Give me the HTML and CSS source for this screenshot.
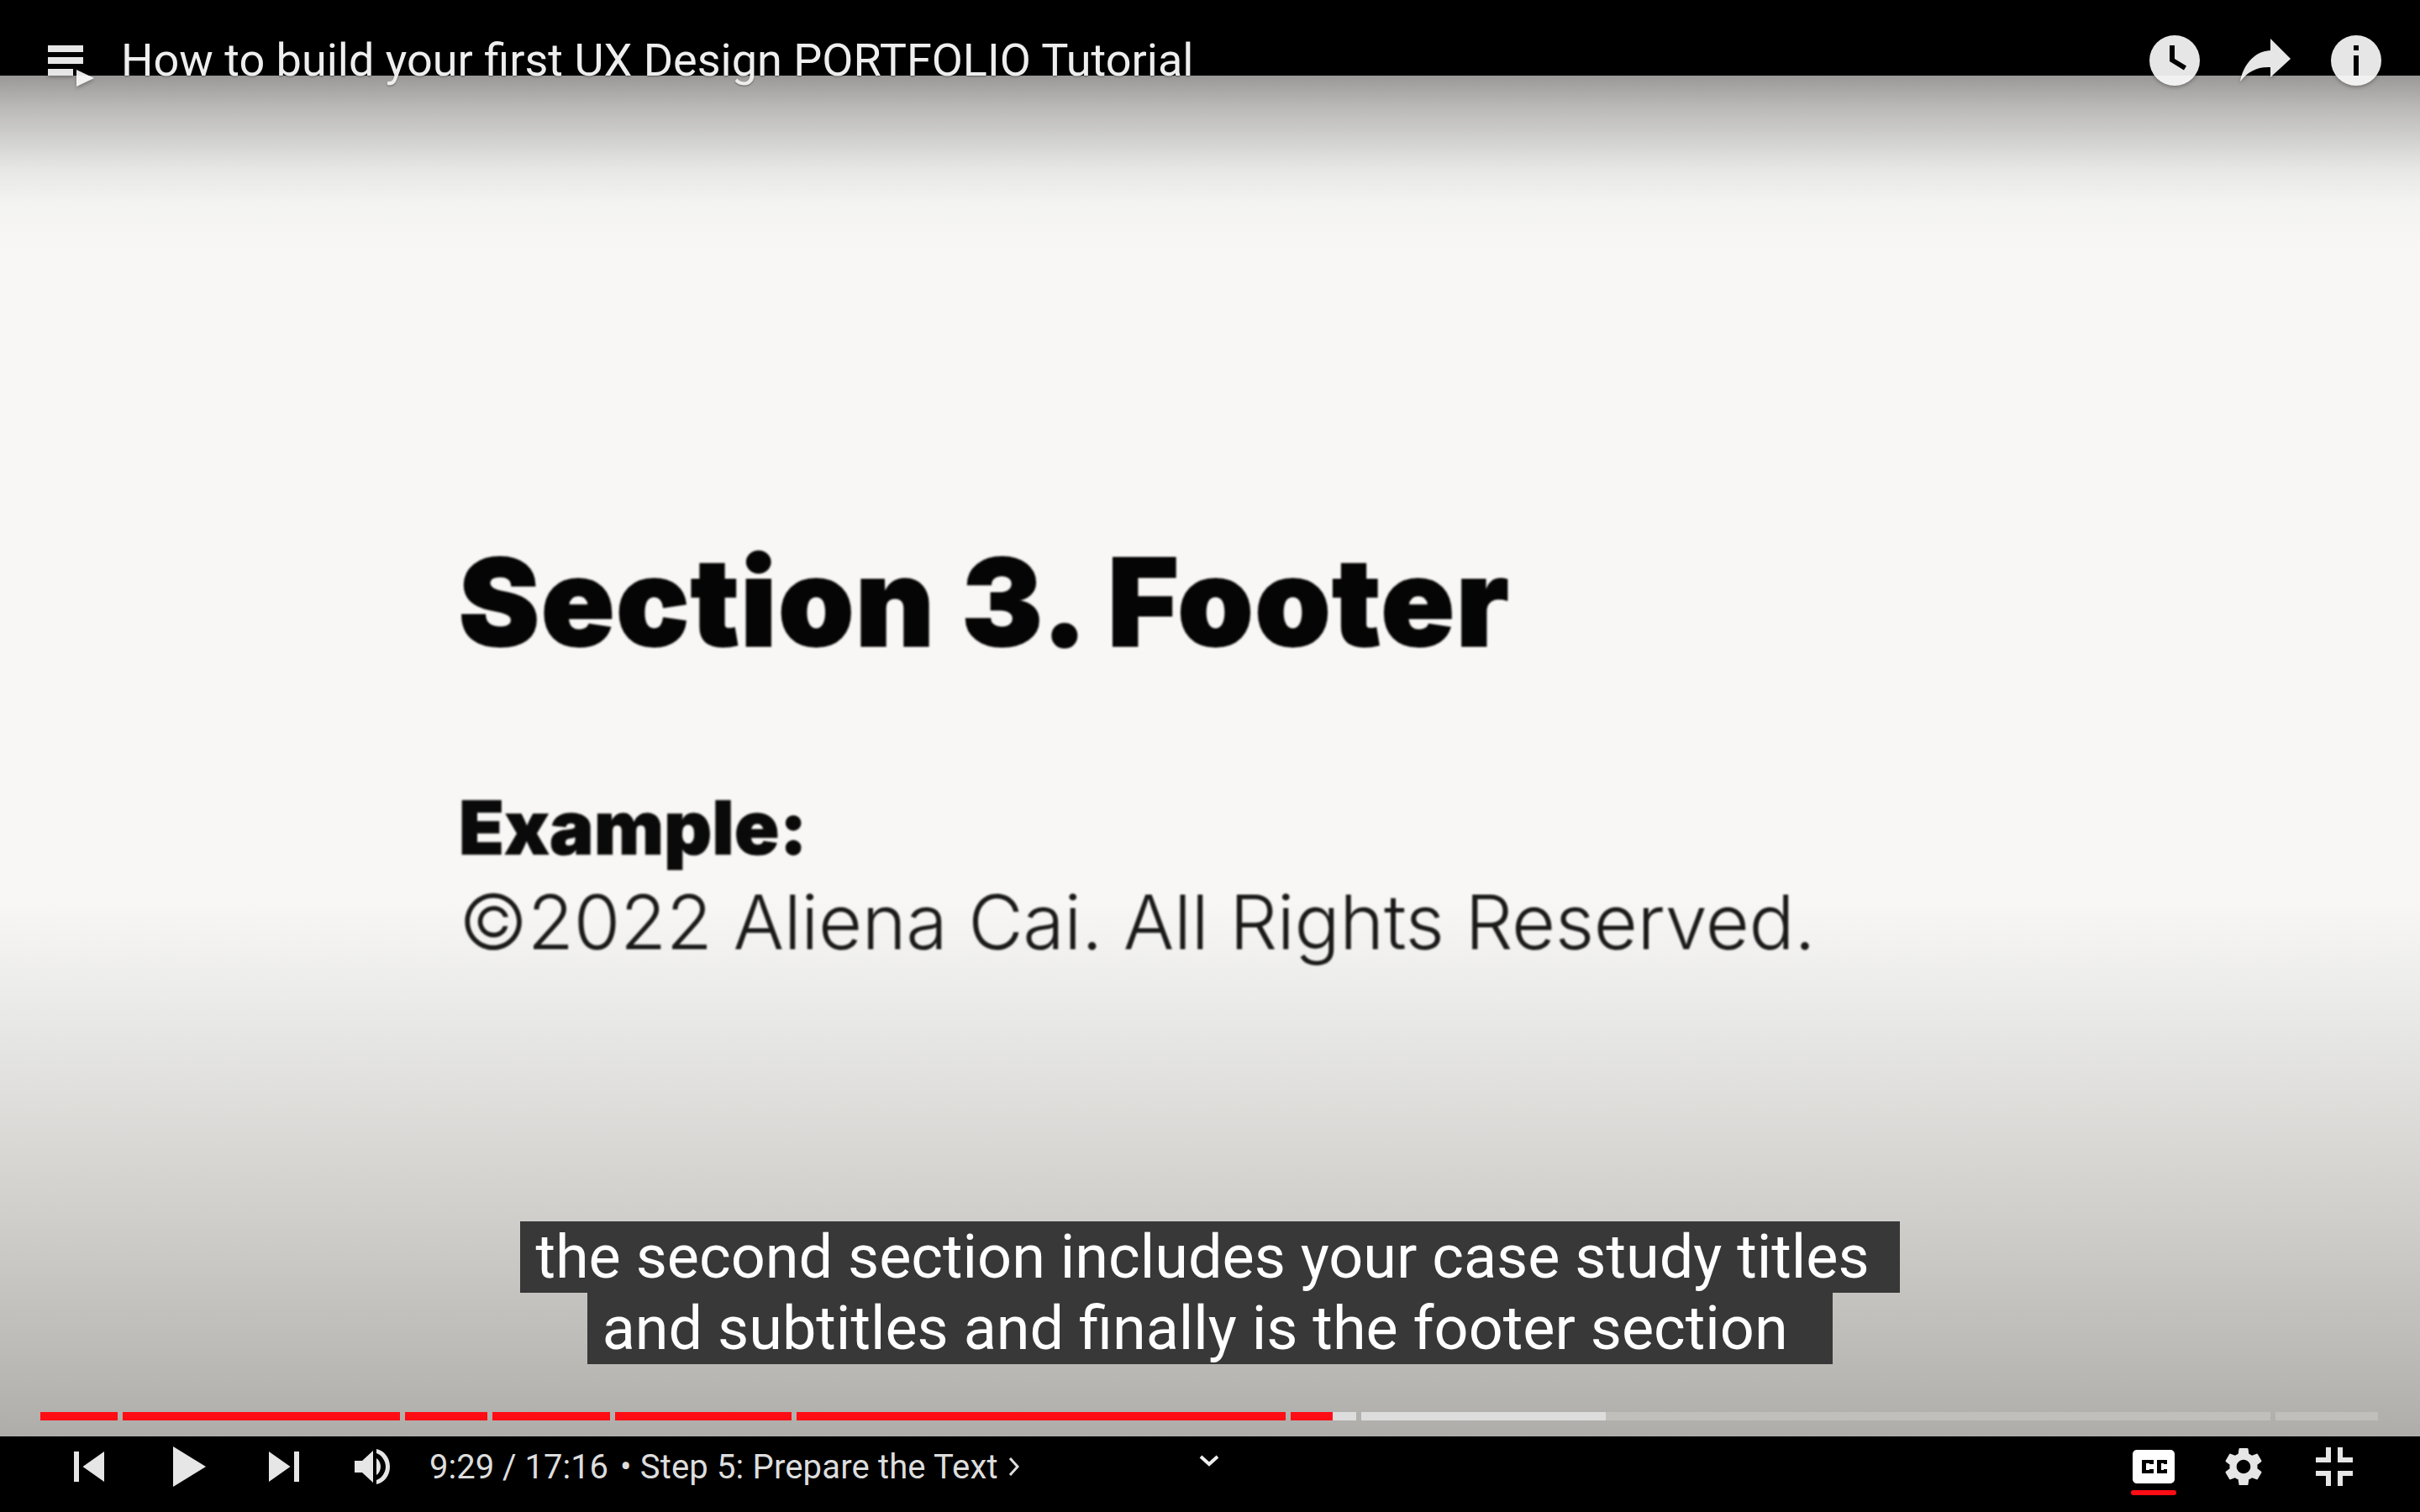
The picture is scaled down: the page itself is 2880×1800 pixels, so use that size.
FILE: index.html
```html
<!DOCTYPE html>
<html lang="en">
<head>
    <meta charset="UTF-8">
    <title>How to build your first UX Design PORTFOLIO Tutorial</title>
    <link rel="stylesheet" href="styles.css">
</head>
<body>
    <div class="player">
        <div class="topbar">
            <svg class="icon playlist-icon" width="56" height="50" viewBox="0 0 56 50">
                <path d="M0 0h42v8H0zM0 14h42v8H0zM0 28h30v8H0zM34 29l21 10-21 10z"/>
            </svg>
            <div class="title">How to build your first UX Design PORTFOLIO Tutorial</div>
            <svg class="icon clock-icon" width="60" height="60" viewBox="0 0 60 60">
                <circle cx="30" cy="30" r="30"/>
                <path class="cut" d="M24 12h6v16l14 8.500-3 5-17-10.500z"/>
            </svg>
            <svg class="icon share-icon" width="62" height="52" viewBox="0 0 62 52">
                <path d="M37 0l24 24-24 22V34C22 33 10 39 1 51 4 34 16 15 37 14z"/>
            </svg>
            <svg class="icon info-icon" width="60" height="60" viewBox="0 0 60 60">
                <circle cx="30" cy="30" r="30"/>
                <path class="cut" d="M27 12h6v6h-6zM27 24h6v24h-6z"/>
            </svg>
        </div>

        <div class="video">
            <div class="slide">
                <h1 class="slide-title">Section 3. Footer</h1>
                <div class="slide-label">Example:</div>
                <div class="slide-text">©2022 Aliena Cai. All Rights Reserved.</div>
            </div>

            <div class="captions">
                <div class="caption-line">the second section includes your case study titles&nbsp;</div>
                <div class="caption-line">and subtitles and finally is the footer section&nbsp;&nbsp;</div>
            </div>

            <div class="progress">
                <div class="seg" style="width:92px"><div class="played" style="width:100%"></div></div>
                <div class="seg" style="width:330px"><div class="played" style="width:100%"></div></div>
                <div class="seg" style="width:98px"><div class="played" style="width:100%"></div></div>
                <div class="seg" style="width:140px"><div class="played" style="width:100%"></div></div>
                <div class="seg" style="width:210px"><div class="played" style="width:100%"></div></div>
                <div class="seg" style="width:582px"><div class="played" style="width:100%"></div></div>
                <div class="seg buffered" style="width:78px"><div class="played" style="width:50px"></div></div>
                <div class="seg" style="width:1082px"><div class="loaded" style="width:291px"></div></div>
                <div class="seg" style="width:122px"></div>
            </div>
        </div>

        <div class="controls">
            <svg class="icon prev-icon" width="36" height="36" viewBox="0 0 36 36">
                <path d="M0 0h6v36H0zM36 0v36L10.500 18z"/>
            </svg>
            <svg class="icon play-icon" width="39" height="48" viewBox="0 0 39 48">
                <path d="M0 0l39 24L0 48z"/>
            </svg>
            <svg class="icon next-icon" width="36" height="36" viewBox="0 0 36 36">
                <path d="M0 0l25.500 18L0 36zM30 0h6v36h-6z"/>
            </svg>
            <svg class="icon volume-icon" width="42" height="42" viewBox="0 0 42 42">
                <path d="M0 14h9L22 2v38L9 28H0zM26 0c9 2 16 10 16 21s-7 19-16 21v-5c6-2 11-9 11-16S32 7 26 5zM26 11c3 2 5 6 5 10s-2 8-5 10z"/>
            </svg>
            <span class="time">9:29 / 17:16</span>
            <span class="chapter">• Step 5: Prepare the Text</span>
            <svg class="chapter-arrow" width="14" height="22" viewBox="0 0 14 22">
                <path d="M2 1l9 10-9 10" fill="none" stroke="#ddd" stroke-width="3"/>
            </svg>
            <svg class="chevron" width="24" height="14" viewBox="0 0 24 14">
                <path d="M2 2l10 9 10-9" fill="none" stroke="#eee" stroke-width="4"/>
            </svg>
            <div class="cc">
                <svg class="cc-icon" width="50" height="40" viewBox="0 0 50 40">
                    <path d="M5 0h40a5 5 0 0 1 5 5v30a5 5 0 0 1-5 5H5a5 5 0 0 1-5-5V5a5 5 0 0 1 5-5zM11 12v16h14v-5h-5v1h-4v-8h4v1h5v-5zM29 12v16h12v-5h-4v1h-3v-8h3v1h4v-5z" fill="#fff" fill-rule="evenodd"/>
                </svg>
                <div class="cc-bar"></div>
            </div>
            <svg class="icon gear-icon" width="46" height="46" viewBox="2 2 20 20">
                <path d="M19.140 12.940c.04-.3.06-.61.06-.94 0-.32-.02-.64-.07-.94l2.030-1.580c.18-.14.23-.41.12-.61l-1.920-3.320c-.12-.22-.37-.29-.59-.22l-2.390.96c-.5-.38-1.030-.7-1.620-.94l-.36-2.540c-.04-.24-.24-.41-.48-.41h-3.840c-.24 0-.43.17-.47.41l-.36 2.540c-.59.24-1.130.57-1.620.94l-2.390-.96c-.22-.08-.47 0-.59.22L2.740 8.870c-.12.21-.08.47.12.61l2.030 1.580c-.05.3-.09.63-.09.94s.02.64.07.94l-2.030 1.580c-.18.14-.23.41-.12.61l1.920 3.320c.12.22.37.29.59.22l2.390-.96c.5.38 1.030.7 1.620.94l.36 2.540c.05.24.24.41.48.41h3.840c.24 0 .44-.17.47-.41l.36-2.540c.59-.24 1.130-.56 1.620-.94l2.390.96c.22.08.47 0 .59-.22l1.920-3.320c.12-.22.07-.47-.12-.61l-2.010-1.580zM12 15.600c-1.980 0-3.600-1.620-3.600-3.600s1.620-3.600 3.600-3.600 3.600 1.620 3.600 3.600-1.620 3.600-3.600 3.600z" fill-rule="evenodd"/>
            </svg>
            <svg class="icon exit-icon" width="44" height="46" viewBox="0 0 44 46">
                <path d="M12 0h6v18H0v-6h12zM26 0h6v12h12v6H26zM0 28h18v18h-6V34H0zM26 28h18v6H32v12h-6z"/>
            </svg>
        </div>
    </div>
</body>
</html>
```

FILE: styles.css
```css
html, body {
    margin: 0;
    height: 100%;
    background-color: #000;
}
.player {
    display: flex;
    flex-direction: column;
    height: 1800px;
    font-family: Roboto, sans-serif;
    overflow: hidden;
}
.icon {
    flex: none;
    fill: #fff;
    fill-opacity: 0.9;
    filter: drop-shadow(0 2px 2px rgba(0, 0, 0, 0.3));
}
.cut {
    fill: #000;
    fill-opacity: 1;
}

/* top bar */
.topbar {
    position: relative;
    z-index: 1;
    display: flex;
    align-items: center;
    flex: none;
    box-sizing: border-box;
    height: 90px;
    padding: 54px 46px 0 57px;
    background-color: #000;
}
.playlist-icon {
    margin-top: 14px;
}
.title {
    flex: 1;
    margin-left: 31px;
    font-size: 54px;
    line-height: 36px;
    white-space: nowrap;
    color: #eee;
    text-shadow: 0 1px 2px rgba(0, 0, 0, 0.4);
}
.share-icon {
    margin-left: 47px;
}
.info-icon {
    margin-left: 47px;
}

/* video area */
.video {
    display: flex;
    flex-direction: column;
    flex: 1;
    background: linear-gradient(to bottom,
        #9a9997 0,
        #bcbbb9 40px,
        #d3d3d1 80px,
        #e6e6e4 110px,
        #f3f3f1 150px,
        #f8f7f5 210px,
        #f8f7f5 980px,
        #ececea 1090px,
        #cfcecb 1364px,
        #b8b7b3 1550px,
        #aeada9 1620px);
}
.slide {
    margin: 555px 0 0 546px;
    filter: blur(1px);
}
.slide-title {
    margin: 0;
    font-family: Inter, sans-serif;
    font-size: 144px;
    font-weight: 900;
    line-height: 1;
    letter-spacing: 2px;
    color: #050505;
    -webkit-text-stroke: 2px #050505;
}
.slide-label {
    margin-top: 152px;
    font-family: Inter, sans-serif;
    font-size: 88px;
    font-weight: 900;
    line-height: 1;
    letter-spacing: 0.4px;
    color: #0a0a0a;
    -webkit-text-stroke: 1px #0a0a0a;
}
.slide-text {
    margin-top: 24px;
    font-family: Inter, sans-serif;
    font-size: 90px;
    font-weight: 300;
    line-height: 1;
    letter-spacing: -0.4px;
    color: #1a1a1a;
}

/* captions */
.captions {
    display: flex;
    flex-direction: column;
    align-items: center;
    margin-top: auto;
}
.caption-line {
    padding: 0 18px;
    font-size: 72px;
    line-height: 85px;
    color: #fff;
    background-color: #383838;
    white-space: nowrap;
}

/* progress bar */
.progress {
    display: flex;
    gap: 6px;
    height: 10px;
    margin: 57px 0 19px 48px;
}
.seg {
    display: flex;
    height: 10px;
    background-color: #c0bfbc;
}
.seg.buffered {
    background-color: #ddd;
}
.played {
    height: 10px;
    background-color: #ff0d14;
}
.loaded {
    height: 10px;
    background-color: #ddd;
}

/* bottom controls */
.controls {
    display: flex;
    align-items: center;
    flex: none;
    box-sizing: border-box;
    height: 90px;
    padding: 0 80px 18px 88px;
    background-color: #000;
    color: #ddd;
}
.controls .icon {
    filter: none;
}
.play-icon {
    margin-left: 82px;
}
.next-icon {
    margin-left: 75px;
}
.volume-icon {
    margin-left: 66px;
}
.time {
    margin-left: 47px;
    font-size: 40px;
    white-space: nowrap;
}
.chapter {
    margin-left: 14px;
    font-size: 40px;
    letter-spacing: 0.15px;
    white-space: nowrap;
}
.chapter-arrow {
    flex: none;
    margin-left: 12px;
}
.chevron {
    flex: none;
    margin: -14px auto 0 213px;
}
.cc {
    flex: none;
    display: flex;
    flex-direction: column;
    align-items: center;
    gap: 8px;
    width: 54px;
    margin-top: 14px;
}
.cc-bar {
    width: 54px;
    height: 6px;
    border-radius: 3px;
    background-color: #ff0d14;
}
.gear-icon {
    margin-left: 57px;
}
.exit-icon {
    margin-left: 63px;
}
```
